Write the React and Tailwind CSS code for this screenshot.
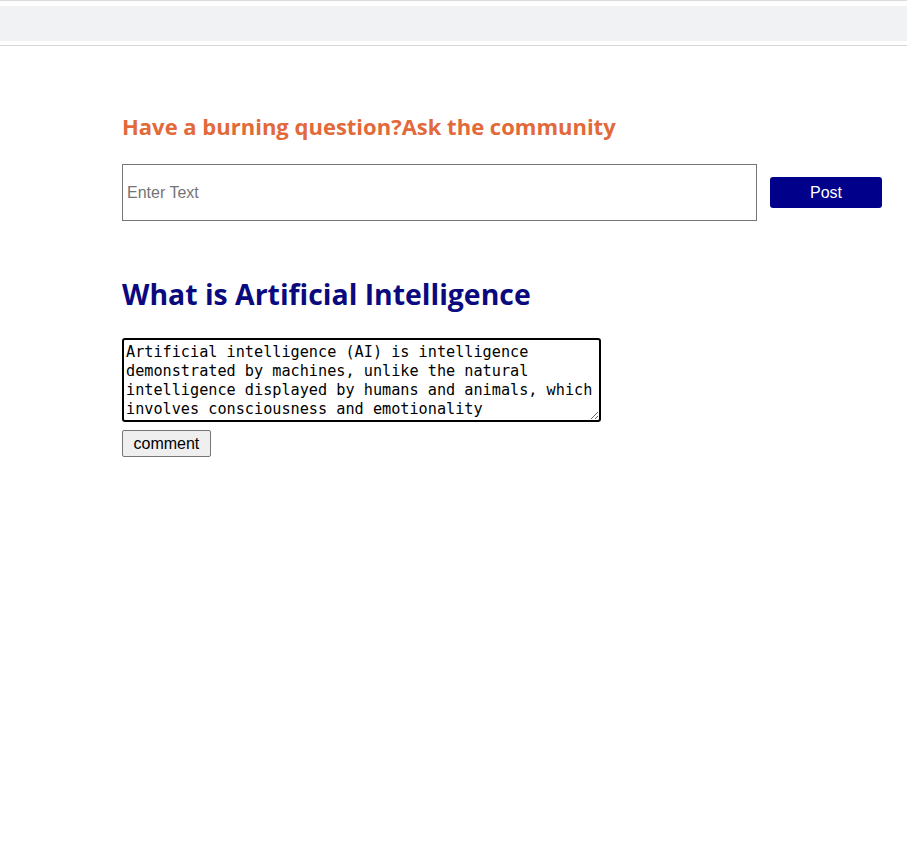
import React from "react";

export default function App() {
  return (
    <div className="min-h-[845px] bg-white" style={{ fontFamily: "'Liberation Sans', Arial, sans-serif" }}>
      <div className="h-px bg-[#dcdcdc]" />
      <div className="pt-[5px] pb-[4px]">
        <div className="h-[35px] bg-[#f1f2f4]" />
      </div>
      <div className="h-px bg-[#d6d6d6]" />

      <div className="pl-[122px] pt-[66px]">
        <h2 className="text-[22px] font-bold text-[#e2693a] leading-[30px] -mt-px" style={{ fontFamily: "'Open Sans', sans-serif" }}>
          Have a burning question?Ask the community
        </h2>
        <div className="mt-[23px] flex items-center">
          <input
            type="text"
            placeholder="Enter Text"
            className="w-[635px] h-[57px] border border-[#767676] px-[4px] text-[16px] placeholder:text-[#757575] outline-none"
          />
          <button className="ml-[13px] w-[112px] h-[31px] bg-[#00008b] text-white text-[16px] rounded-[3px]">
            Post
          </button>
        </div>

        <h1 className="mt-[55px] text-[28.4px] font-bold text-[#0a0a7e] leading-[36px]" style={{ fontFamily: "'Open Sans', sans-serif" }}>
          What is Artificial Intelligence
        </h1>
        <div className="mt-[26px]">
          <textarea
            readOnly
            className="block w-[479px] h-[84px] border-2 border-black rounded-[3px] px-[2px] pt-[3px] pb-[1px] text-[15.2px] leading-[19px] text-black outline-none resize-y"
            style={{ fontFamily: "'DejaVu Sans Mono', 'Liberation Mono', monospace" }}
            value="Artificial intelligence (AI) is intelligence demonstrated by machines, unlike the natural intelligence displayed by humans and animals, which involves consciousness and emotionality"
          />
          <button className="mt-[8px] h-[27px] px-[10.5px] bg-[#efefef] border border-[#767676] rounded-[2px] text-[16px] text-black">
            comment
          </button>
        </div>
      </div>
    </div>
  );
}
